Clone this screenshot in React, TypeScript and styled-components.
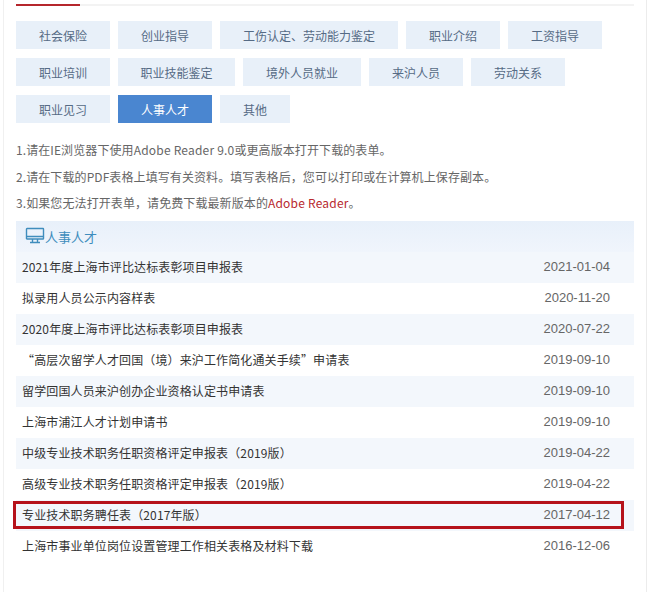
import React from "react";
import styled, { createGlobalStyle } from "styled-components";

const Global = createGlobalStyle`
  html, body { margin: 0; padding: 0; background: #fff; }
  body { font-family: "Noto Sans CJK SC", "Liberation Sans", sans-serif; }
`;

const Page = styled.div`
  width: 644px;
  height: 592px;
  margin-left: 3px;
  box-sizing: border-box;
  border-left: 1px solid #f0f0f0;
  border-right: 1px solid #ececec;
  padding: 4px 12px 0 12px;
  overflow: hidden;
`;

const TopRule = styled.div`
  height: 2px;
  background: #f3f3f3;
  margin-bottom: 15px;
`;

const TopAccent = styled.div`
  width: 64px;
  height: 2px;
  background: #b5262c;
`;

const TabRow = styled.div`
  display: flex;
  gap: 8px;
  margin-bottom: 9px;
`;

const Tab = styled.div<{ $active?: boolean; $pad?: number }>`
  height: 28px;
  padding: 0 ${(p) => p.$pad ?? 23}px;
  display: flex;
  align-items: center;
  font-size: 12px;
  color: ${(p) => (p.$active ? "#fff" : "#566b85")};
  background: ${(p) => (p.$active ? "#4a86d0" : "#e8f0f9")};
`;

const Notes = styled.div`
  margin-top: 14px;
  margin-bottom: 4px;
`;

const Note = styled.p`
  margin: 0;
  height: 26.5px;
  line-height: 26.5px;
  font-size: 12px;
  letter-spacing: 0.09px;
  color: #666;
`;

const Latin = styled.span`
  letter-spacing: 0.2px;
`;

const RedText = styled(Latin)`
  color: #b8282e;
`;

const Heading = styled.div`
  height: 31px;
  padding-left: 9px;
  display: flex;
  align-items: center;
  font-size: 13px;
  color: #3f8dbd;
  background: linear-gradient(#e8f0fa, #f0f5fc);
`;

const Rows = styled.div`
  position: relative;
`;

const Row = styled.div<{ $tint?: boolean }>`
  height: 31px;
  padding: 0 24px 2px 6px;
  box-sizing: border-box;
  display: flex;
  align-items: center;
  justify-content: space-between;
  font-size: 12px;
  letter-spacing: 0.13px;
  color: #333;
  background: ${(p) => (p.$tint ? "#f3f7fc" : "#fff")};
`;

const DateText = styled.span`
  color: #666;
  font-size: 13px;
  letter-spacing: 0;
  font-family: "Liberation Sans", sans-serif;
`;

const Marker = styled.div`
  position: absolute;
  left: -3px;
  right: 10px;
  top: 249px;
  height: 28px;
  box-sizing: border-box;
  border: 3px solid #b5121b;
  pointer-events: none;
`;

const tabRows: { label: string; active?: boolean; pad?: number }[][] = [
  [
    { label: "社会保险" },
    { label: "创业指导" },
    { label: "工伤认定、劳动能力鉴定" },
    { label: "职业介绍" },
    { label: "工资指导" },
  ],
  [
    { label: "职业培训" },
    { label: "职业技能鉴定", pad: 22.5 },
    { label: "境外人员就业" },
    { label: "来沪人员" },
    { label: "劳动关系" },
  ],
  [
    { label: "职业见习" },
    { label: "人事人才", active: true },
    { label: "其他" },
  ],
];

const rows = [
  ["2021年度上海市评比达标表彰项目申报表", "2021-01-04"],
  ["拟录用人员公示内容样表", "2020-11-20"],
  ["2020年度上海市评比达标表彰项目申报表", "2020-07-22"],
  ["“高层次留学人才回国（境）来沪工作简化通关手续”申请表", "2019-09-10"],
  ["留学回国人员来沪创办企业资格认定书申请表", "2019-09-10"],
  ["上海市浦江人才计划申请书", "2019-09-10"],
  ["中级专业技术职务任职资格评定申报表（2019版）", "2019-04-22"],
  ["高级专业技术职务任职资格评定申报表（2019版）", "2019-04-22"],
  ["专业技术职务聘任表（2017年版）", "2017-04-12"],
  ["上海市事业单位岗位设置管理工作相关表格及材料下载", "2016-12-06"],
];

const MonitorIcon = () => (
  <svg width="20" height="18" viewBox="0 0 20 18" fill="none" stroke="#3f8dbd" strokeWidth="1.4">
    <rect x="1.5" y="1.5" width="17" height="10.5" rx="0.5" />
    <path d="M1.5 9.5h17M7.5 12v3M12.5 12v3M5 15.5h10" />
  </svg>
);

export default function App() {
  return (
    <Page>
      <Global />
      <TopRule>
        <TopAccent />
      </TopRule>
      {tabRows.map((r, i) => (
        <TabRow key={i}>
          {r.map((t) => (
            <Tab key={t.label} $active={t.active} $pad={t.pad}>
              {t.label}
            </Tab>
          ))}
        </TabRow>
      ))}
      <Notes>
        <Note>
          1.请在IE浏览器下使用<Latin>Adobe Reader 9.0</Latin>或更高版本打开下载的表单。
        </Note>
        <Note>2.请在下载的PDF表格上填写有关资料。填写表格后，您可以打印或在计算机上保存副本。</Note>
        <Note>
          3.如果您无法打开表单，请免费下载最新版本的<RedText>Adobe Reader</RedText>。
        </Note>
      </Notes>
      <Heading>
        <MonitorIcon />
        人事人才
      </Heading>
      <Rows>
        {rows.map(([title, date], i) => (
          <Row key={title} $tint={i % 2 === 0}>
            <span>{title}</span>
            <DateText>{date}</DateText>
          </Row>
        ))}
        <Marker />
      </Rows>
    </Page>
  );
}
